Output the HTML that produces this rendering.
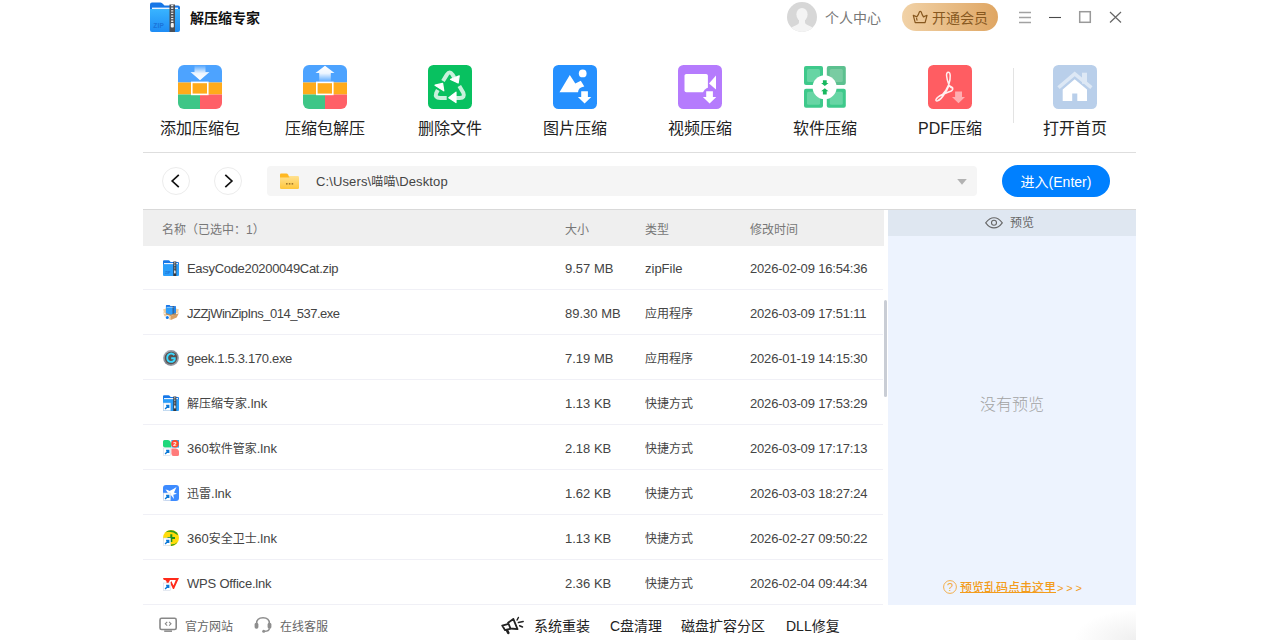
<!DOCTYPE html>
<html lang="zh-CN">
<head>
<meta charset="utf-8">
<title>解压缩专家</title>
<style>
*{box-sizing:border-box;margin:0;padding:0}
html,body{width:1280px;height:640px;overflow:hidden;background:#fff}
body{font-family:"Liberation Sans","Noto Sans CJK SC",sans-serif;color:#222;position:relative}
.abs{position:absolute}
.t{position:absolute;white-space:nowrap;line-height:20px;height:20px}
#win{position:absolute;left:143px;top:0;width:993px;height:640px;background:#fff}
/* title bar */
#title{left:190px;top:8px;font-size:14px;font-weight:700;color:#111}
#uc{left:825px;top:8px;font-size:14px;color:#777}
#vip{left:902px;top:3px;width:96px;height:28px;border-radius:14px;background:linear-gradient(90deg,#f1d2a7,#dfa663)}
#vipt{left:932px;top:8px;font-size:14px;color:#87581f}
/* toolbar */
.tl{position:absolute;top:119px;width:120px;text-align:center;font-size:16px;line-height:20px;color:#222;white-space:nowrap}
.ic{position:absolute;top:65px;width:44px;height:44px}
/* nav */
.circ{position:absolute;top:167px;width:28px;height:28px;border-radius:50%;border:1px solid #ececec;background:#fff}
#path{left:267px;top:166px;width:710px;height:30px;border-radius:4px;background:#f5f5f5}
#patht{left:316px;top:172px;font-size:13px;color:#444;letter-spacing:0.120px}
#go{left:1002px;top:165px;width:108px;height:32px;border-radius:16px;background:#0080ff}
#got{left:1002px;top:172px;width:108px;text-align:center;font-size:14px;color:#fff}
/* table */
#thead{left:143px;top:210px;width:741px;height:36px;background:#efefef}
.th{position:absolute;top:220px;font-size:12px;line-height:20px;color:#777;white-space:nowrap}
.row{position:absolute;left:143px;width:740px;height:45px;border-bottom:1px solid #f0f0f6}
.row span{position:absolute;top:14px;font-size:13px;line-height:20px;color:#444;white-space:nowrap}
.row .n{left:44px}.row .s{left:422px}.row .k{left:502px}.row .d{left:607px;letter-spacing:-0.180px}
.row .k.c{font-size:12px}
.row span i,#patht i{font-style:normal;font-size:12px}
.row svg{position:absolute;left:20px;top:15px;width:16px;height:16px}
/* preview */
#pv{left:888px;top:209px;width:248px;height:396px;background:#edf3fe}
#pvh{left:888px;top:210px;width:248px;height:26px;background:#dfe7f1}
</style>
</head>
<body>
<div id="win"></div>
<!-- title bar -->
<svg class="abs" style="left:150px;top:2px" width="30" height="30" viewBox="0 0 30 30">
 <defs><linearGradient id="lg1" x1="0" y1="0" x2="0" y2="1"><stop offset="0" stop-color="#39b4ff"/><stop offset="1" stop-color="#1e8cf5"/></linearGradient></defs>
 <path d="M0 2.5Q0 0.5 2 0.5H10.5Q12 0.5 13 2L14.5 3.5H28Q30 3.5 30 5.5V12H0Z" fill="#1676e6"/>
 <rect x="2" y="5.6" width="26" height="3" fill="#e9f4ff"/>
 <path d="M0 7H30V28Q30 30 28 30H2Q0 30 0 28Z" fill="url(#lg1)"/>
 <rect x="19.5" y="2.5" width="5.5" height="27.5" fill="#4a4f57"/>
 <path d="M22.2 3V21" stroke="#e8e8e8" stroke-width="2.2" stroke-dasharray="1.3 1.3"/>
 <rect x="20.8" y="21" width="3" height="4.5" rx="1" fill="#f2f2f2"/>
 <text x="3.2" y="26" font-family="Liberation Sans,sans-serif" font-size="6.5" font-weight="700" fill="#1b74d8" letter-spacing="0.3">ZIP</text>
</svg>
<div class="t" id="title">解压缩专家</div>
<svg class="abs" style="left:787px;top:2px" width="30" height="30" viewBox="0 0 30 30">
 <defs><clipPath id="cpa"><circle cx="15" cy="15" r="15"/></clipPath></defs>
 <circle cx="15" cy="15" r="15" fill="#d7d7d7"/>
 <g clip-path="url(#cpa)" fill="#f4f4f4">
  <ellipse cx="15" cy="12.5" rx="5.6" ry="6.6"/>
  <path d="M12 17h6v3.2q0 2 3.5 3.2q5 1.6 6 4.6v4h-25v-4q1-3 6-4.600q3.500-1.200 3.500-3.200z"/>
 </g>
</svg>
<div class="t" id="uc">个人中心</div>
<div class="abs" id="vip"></div>
<svg class="abs" style="left:912px;top:10px" width="16" height="14" viewBox="0 0 16 14" fill="none" stroke="#87581f" stroke-width="1.2" stroke-linejoin="round" stroke-linecap="round">
 <path d="M3.200 12.700L1.300 5.300L4.800 6.900Q6.800 4.300 7.300 2.100Q8.300 0.700 9.300 2.100Q9.800 4.300 11.500 6.900L15 5.300L13.100 12.700Z"/>
 <path d="M4.600 8.400L5 10.200" />
</svg>
<div class="t" id="vipt">开通会员</div>
<svg class="abs" style="left:1015px;top:8px" width="115" height="20" viewBox="1015 8 115 20" fill="none">
 <path d="M1019 12.500H1031M1019 17.500H1031M1019 22.500H1031" stroke="#a2a2a2" stroke-width="1.500"/>
 <path d="M1049 17.500H1061" stroke="#4a4a4a" stroke-width="1.100"/>
 <rect x="1079.700" y="11.700" width="10.600" height="10.600" stroke="#999" stroke-width="1.500"/>
 <path d="M1110 12L1121 22.500M1121 12L1110 22.500" stroke="#666" stroke-width="1.200"/>
</svg>


<!-- toolbar -->
<svg class="ic" style="left:178px" viewBox="0 0 44 44">
 <defs><clipPath id="cp1"><rect width="44" height="44" rx="6"/></clipPath>
 <linearGradient id="ga" x1="0" y1="0" x2="0" y2="1"><stop offset="0" stop-color="#fff" stop-opacity="0"/><stop offset="0.55" stop-color="#fff" stop-opacity="0.900"/><stop offset="1" stop-color="#fff"/></linearGradient></defs>
 <g clip-path="url(#cp1)"><rect width="44" height="17.500" fill="#4da3ff"/><rect y="17.500" width="44" height="12" fill="#ffab1b"/><rect y="29.500" width="22" height="14.500" fill="#3ec687"/><rect x="22" y="29.500" width="22" height="14.500" fill="#ff6067"/></g>
 <path d="M16.500 0H27.500V7H31.500L22 15.200L12.500 7H16.500Z" fill="url(#ga)"/>
 <rect x="13.800" y="17.400" width="16" height="12" fill="none" stroke="#fff" stroke-width="1.600"/>
</svg>
<div class="tl" style="left:140px">添加压缩包</div>
<svg class="ic" style="left:303px" viewBox="0 0 44 44">
 <defs><linearGradient id="gb" x1="0" y1="0" x2="0" y2="1"><stop offset="0" stop-color="#fff"/><stop offset="0.45" stop-color="#fff" stop-opacity="0.900"/><stop offset="1" stop-color="#fff" stop-opacity="0"/></linearGradient></defs>
 <g clip-path="url(#cp1)"><rect width="44" height="17.500" fill="#4da3ff"/><rect y="17.500" width="44" height="12" fill="#ffab1b"/><rect y="29.500" width="22" height="14.500" fill="#3ec687"/><rect x="22" y="29.500" width="22" height="14.500" fill="#ff6067"/></g>
 <path d="M22 0.800L31.500 8H27.800V17.500H16.200V8H12.500Z" fill="url(#gb)"/>
 <rect x="13.800" y="17.400" width="16" height="12" fill="none" stroke="#fff" stroke-width="1.600"/>
</svg>
<div class="tl" style="left:265px">压缩包解压</div>
<svg class="ic" style="left:428px" viewBox="0 0 44 44">
 <rect width="44" height="44" rx="5.500" fill="#08c160"/>
 <g fill="none" stroke="#fff" stroke-opacity="0.780" stroke-width="4" stroke-linejoin="round">
  <path d="M15 16L18.900 9.600Q21.600 5.600 24.500 9.600L26.300 12.600"/>
  <path d="M31.300 21L35.300 27.800Q37.300 33 31.800 33H28"/>
  <path d="M18.700 33H12.200Q6.500 33 8.200 28.200L9.800 25"/>
 </g>
 <g fill="#fff" stroke="#fff" stroke-width="1.200" stroke-linejoin="round">
  <path d="M22.600 14.400L31.200 10.800L30.200 17.900Z"/>
  <path d="M20.800 32.800L28 27.200V37.600Z"/>
  <path d="M7 20.200L14.600 18.400L15.800 25.800Z"/>
 </g>
</svg>
<div class="tl" style="left:390px">删除文件</div>
<svg class="ic" style="left:553px" viewBox="0 0 44 44">
 <rect width="44" height="44" rx="5.500" fill="#2590ff"/>
 <circle cx="29.700" cy="8.400" r="3.900" fill="#fff"/>
 <path d="M6.500 27.300L16.800 10L22.300 18.400L27.800 15.800L31.300 21.500Q25.400 22.300 25 27.300Z" fill="#fff"/>
 <path d="M28.200 26.200H34.900V32H38.300L31.600 38.400L24.900 32H28.200Z" fill="#fff"/>
</svg>
<div class="tl" style="left:515px">图片压缩</div>
<svg class="ic" style="left:678px" viewBox="0 0 44 44">
 <rect width="44" height="44" rx="5.500" fill="#b57bfd"/>
 <rect x="6.500" y="9" width="23.400" height="18.300" rx="1.800" fill="#fff"/>
 <path d="M31 18.600L38 10.600V24.600Z" fill="#fff"/>
 <circle cx="31.600" cy="29.600" r="7" fill="#b57bfd"/>
 <path d="M28.200 26.200H34.900V32H38.300L31.600 38.400L24.900 32H28.200Z" fill="#fff"/>
</svg>
<div class="tl" style="left:640px">视频压缩</div>
<svg class="ic" style="left:803px" viewBox="0 0 44 44">
 <g fill="#3ec98b"><rect x="1" y="1" width="19" height="19" rx="2"/><rect x="1" y="23.700" width="19" height="19" rx="2"/><rect x="23.800" y="23.700" width="19" height="19" rx="2"/></g>
 <rect x="23.800" y="1" width="19" height="19" rx="2" fill="#5cc08f"/>
 <g fill="#67d5a4"><rect x="4" y="4" width="13" height="13" rx="1.500"/><rect x="4" y="26.700" width="13" height="13" rx="1.500"/><rect x="26.800" y="26.700" width="13" height="13" rx="1.500"/></g>
 <rect x="26.800" y="4" width="13" height="13" rx="1.500" fill="#79cca2"/>
 <circle cx="21.600" cy="22.200" r="12" fill="#fff"/>
 <path d="M19.900 15.300H23.700V18H25.500L21.800 21L18.100 18H19.900Z" fill="#18b85f"/>
 <path d="M21.800 23.200L25.500 26.200H23.700V29.400H19.900V26.200H18.100Z" fill="#18b85f"/>
</svg>
<div class="tl" style="left:765px">软件压缩</div>
<svg class="ic" style="left:928px" viewBox="0 0 44 44">
 <rect width="44" height="44" rx="5.500" fill="#ff5d62"/>
 <path d="M20.300 7.300Q18.300 7.300 18.600 11Q19 15 20.800 19.500Q18 26 14.500 29.500Q9 32 8 34.500Q7.500 36.300 9.600 35.800Q13 34.500 16 29.500Q19 25.500 21 20.500Q23.500 23.500 24.500 22.800Q25.500 24.500 22.700 26.300Q20 27.300 17 28.600M20.800 19.500Q22.500 14 22.200 10.500Q22 7.300 20.300 7.300M21 20.500L24.600 22.600" fill="none" stroke="#fff" stroke-opacity="0.900" stroke-width="1.500" stroke-linejoin="round" stroke-linecap="round"/>
 <path d="M27.100 26.400H34V32H37L30.500 38.200L24 32H27.100Z" fill="#fff" fill-opacity="0.500"/>
</svg>
<div class="tl" style="left:890px">PDF压缩</div>
<div class="abs" style="left:1013px;top:68px;width:1px;height:55px;background:#e3e3e3"></div>
<svg class="ic" style="left:1053px" viewBox="0 0 44 44">
 <rect width="44" height="44" rx="5.500" fill="#b9cfea"/>
 <rect x="29" y="7.700" width="5" height="11" fill="#dde8f5"/>
 <path d="M5.500 22.600L21.700 8.800L38.400 22.600" fill="none" stroke="#dde8f5" stroke-width="3.600"/>
 <path d="M9.700 24.500L21.700 14.200L34 24.500V36.100H24.300V28.400H19.200V36.100H9.700Z" fill="#fff"/>
</svg>
<div class="tl" style="left:1015px">打开首页</div>
<div class="abs" style="left:143px;top:152px;width:993px;height:1px;background:#dedede"></div>

<!-- nav -->
<div class="circ" style="left:162px"></div>
<div class="circ" style="left:214px"></div>
<svg class="abs" style="left:162px;top:167px" width="80" height="28" viewBox="0 0 80 28" fill="none" stroke="#111" stroke-width="1.700" stroke-linejoin="miter">
 <path d="M16.800 7.800L10.200 14L16.800 20.200"/><path d="M63.300 7.800L69.900 14L63.300 20.200"/>
</svg>
<div class="abs" id="path"></div>
<svg class="abs" style="left:280px;top:173px" width="19" height="16" viewBox="0 0 19 16"><defs><linearGradient id="gf" x1="0" y1="0" x2="0" y2="1"><stop offset="0" stop-color="#ffe190"/><stop offset="1" stop-color="#ffc63a"/></linearGradient></defs>
 <path d="M0 1.500Q0 0.500 1 0.500H6.500Q7.500 0.500 8 1.500L9 3.500H0Z" fill="#ffb822"/>
 <path d="M0 3H17.800Q19 3 19 4.200V14.800Q19 16 17.800 16H1.200Q0 16 0 14.800Z" fill="url(#gf)"/>
 <path d="M0 3H8.500L9.500 4.500H0Z" fill="#ffb822"/>
 <rect x="6" y="10.200" width="1.600" height="1.300" fill="#8a6420"/><rect x="8.800" y="10.200" width="1.600" height="1.300" fill="#8a6420"/><rect x="11.600" y="10.200" width="1.600" height="1.300" fill="#8a6420"/>
</svg>
<div class="t" id="patht">C:\Users\<i>喵喵</i>\Desktop</div>
<svg class="abs" style="left:956px;top:178px" width="12" height="8" viewBox="0 0 12 8"><path d="M1.200 1H10.800L6 6.800Z" fill="#b2b2b2"/></svg>
<div class="abs" id="go"></div>
<div class="t" id="got">进入(Enter)</div>

<!-- table -->
<div class="abs" id="thead"></div>
<div class="th" style="left:162px">名称（已选中：1）</div><div class="th" style="left:565px">大小</div><div class="th" style="left:645px">类型</div><div class="th" style="left:750px">修改时间</div>
<div class="row" style="top:245px"><svg viewBox="0 0 16 16"><path d="M0 1.200Q0 0.200 1 0.200H5.500Q6.300 0.200 6.800 1L7.600 2H15Q16 2 16 3V6H0Z" fill="#1778e8"/><rect x="1" y="3" width="14" height="1.600" fill="#eaf4ff"/><path d="M0 4.200H16V15Q16 16 15 16H1Q0 16 0 15Z" fill="#2b9ffb"/><rect x="10.300" y="1.500" width="3" height="14.500" fill="#34373d"/><path d="M11.800 2V11" stroke="#e6e6e6" stroke-width="1.200" stroke-dasharray="0.800 0.800"/><rect x="11.100" y="11" width="1.500" height="2.400" fill="#f2f2f2"/><text x="2" y="13.500" font-family="Liberation Sans,sans-serif" font-size="3.500" font-weight="700" fill="#1b74d8">ZIP</text></svg><span class="n" style="letter-spacing:-0.310px">EasyCode20200049Cat.zip</span><span class="s">9.57 MB</span><span class="k">zipFile</span><span class="d">2026-02-09 16:54:36</span></div>
<div class="row" style="top:290px"><svg viewBox="0 0 16 16"><path d="M0 4.600L3 3.400V8.500L0.800 7.600L0 8.300L0.800 6.200Z" fill="#f0cd9c"/><path d="M16 4.600L13 3.400V8.500L15.200 7.600L16 8.300L15.200 6.200Z" fill="#f0cd9c"/><path d="M2.900 0.700Q2.900 0 3.600 0H6.600L7.400 1H12.800V9.500H2.900Z" fill="#1876e6"/><rect x="3.600" y="1.900" width="8.600" height="1" fill="#e6f2ff"/><rect x="3" y="2.500" width="6.800" height="7.500" fill="#2e9ffb"/><rect x="9.700" y="1" width="1" height="9" fill="#4b5058"/><rect x="10.700" y="2" width="2.100" height="8" fill="#1c84ea"/><path d="M0.200 8.200L7.800 11L7.800 15L2.300 12.600Z" fill="#edc38e"/><path d="M15.800 8.200L7.800 11L7.800 15L13.700 12.600Z" fill="#d8a063"/><path d="M2.900 9.200L7.800 11L12.800 9.200L12.800 8L7.800 9.800L2.900 8Z" fill="#c58d50"/><circle cx="4.300" cy="12.600" r="2.300" fill="#fff"/><circle cx="4.300" cy="12.600" r="1.500" fill="#0f7bf0"/></svg><span class="n" style="letter-spacing:-0.520px">JZZjWinZipIns_014_537.exe</span><span class="s">89.30 MB</span><span class="k c">应用程序</span><span class="d">2026-03-09 17:51:11</span></div>
<div class="row" style="top:335px"><svg viewBox="0 0 16 16"><defs><linearGradient id="gg" x1="0" y1="0" x2="1" y2="1"><stop offset="0" stop-color="#b9bec8"/><stop offset="0.5" stop-color="#7d828c"/><stop offset="1" stop-color="#a9aeb8"/></linearGradient></defs><circle cx="8" cy="8" r="7.900" fill="url(#gg)"/><circle cx="8" cy="8" r="6.200" fill="#5b4f4c"/><path d="M11.400 5.100Q9.700 3.300 7.500 3.600Q4.200 4.300 4.200 8Q4.400 11.800 8 11.900Q10.800 11.800 11.700 9.600V8.300H8.200" fill="none" stroke="#3bd8ff" stroke-width="1.900"/></svg><span class="n" style="letter-spacing:-0.310px">geek.1.5.3.170.exe</span><span class="s">7.19 MB</span><span class="k c">应用程序</span><span class="d">2026-01-19 14:15:30</span></div>
<div class="row" style="top:380px"><svg viewBox="0 0 16 16"><path d="M0 1.200Q0 0.200 1 0.200H5.500Q6.300 0.200 6.800 1L7.600 2H15Q16 2 16 3V6H0Z" fill="#1778e8"/><rect x="1" y="3" width="14" height="1.600" fill="#eaf4ff"/><path d="M0 4.200H16V15Q16 16 15 16H1Q0 16 0 15Z" fill="#2b9ffb"/><rect x="10.300" y="1.500" width="3" height="14.500" fill="#34373d"/><path d="M11.800 2V11" stroke="#e6e6e6" stroke-width="1.200" stroke-dasharray="0.800 0.800"/><rect x="11.100" y="11" width="1.500" height="2.400" fill="#f2f2f2"/><g><rect x="0.300" y="8" width="7.200" height="7.700" fill="#fff" stroke="#c9d3e3" stroke-width="0.500"/><path d="M2.100 13.900L5.300 10.700M3.100 10.500H5.700V13.100" fill="none" stroke="#0b78d6" stroke-width="1.400"/></g></svg><span class="n"><i>解压缩专家</i>.lnk</span><span class="s">1.13 KB</span><span class="k c">快捷方式</span><span class="d">2026-03-09 17:53:29</span></div>
<div class="row" style="top:425px"><svg viewBox="0 0 16 16"><path d="M0 1.500Q0 0 1.500 0H5Q8 0.500 8 4V7.600H2Q0 7.600 0 5.500Z" fill="#1fd87c"/><rect x="8.400" y="0" width="7.600" height="7.600" fill="#2cb5fb"/><path d="M8.400 8.400H13Q16 9 16 12V14.500Q16 16 14.500 16H10.500Q8.400 16 8.400 13.500Z" fill="#ff7b7b"/><circle cx="12" cy="3.800" r="3.800" fill="#ff4b2b"/><text x="10.300" y="6" font-family="Liberation Sans,sans-serif" font-size="6" font-weight="700" fill="#fff">2</text><g><rect x="0.300" y="8" width="7.200" height="7.700" fill="#fff" stroke="#c9d3e3" stroke-width="0.500"/><path d="M2.100 13.900L5.300 10.700M3.100 10.500H5.700V13.100" fill="none" stroke="#0b78d6" stroke-width="1.400"/></g></svg><span class="n">360<i>软件管家</i>.lnk</span><span class="s">2.18 KB</span><span class="k c">快捷方式</span><span class="d">2026-03-09 17:17:13</span></div>
<div class="row" style="top:470px"><svg viewBox="0 0 16 16"><rect width="16" height="16" rx="3" fill="#3d8bff"/><path d="M2.500 4.500Q5 4.500 6.500 6Q10 4.500 13.500 2Q12 5.500 11 7.500L14 8.800L10.300 9.800L11 14L8.300 10.500Q6 10 4.500 7.500Q3.800 6 2.500 4.500Z" fill="#fff"/><g><rect x="0.300" y="8" width="7.200" height="7.700" fill="#fff" stroke="#c9d3e3" stroke-width="0.500"/><path d="M2.100 13.900L5.300 10.700M3.100 10.500H5.700V13.100" fill="none" stroke="#0b78d6" stroke-width="1.400"/></g></svg><span class="n"><i>迅雷</i>.lnk</span><span class="s">1.62 KB</span><span class="k c">快捷方式</span><span class="d">2026-03-03 18:27:24</span></div>
<div class="row" style="top:515px"><svg viewBox="0 0 16 16"><circle cx="8" cy="8" r="8" fill="#ffdc0a"/><path d="M2.500 2.200Q8 -2 13.800 2.500Q15 4 14.800 5.200Q9 0.500 2.500 2.200Z" fill="#2f9a1f"/><path d="M8 15.900Q12 15.500 14.500 12Q12 14.500 8 14.600Z" fill="#2f9a1f"/><path d="M8.300 4.300V12M4.500 8H12" stroke="#1f8f1f" stroke-width="2"/><g><rect x="0.300" y="8" width="7.200" height="7.700" fill="#fff" stroke="#c9d3e3" stroke-width="0.500"/><path d="M2.100 13.900L5.300 10.700M3.100 10.500H5.700V13.100" fill="none" stroke="#0b78d6" stroke-width="1.400"/></g></svg><span class="n">360<i>安全卫士</i>.lnk</span><span class="s">1.13 KB</span><span class="k c">快捷方式</span><span class="d">2026-02-27 09:50:22</span></div>
<div class="row" style="top:560px"><svg viewBox="0 0 16 16"><path d="M0 3H16L11 14H10L7.200 8.200L8.300 6L10.500 10.500L12.800 5H7L4.500 10H2.300L3.800 7L2.300 5H0.800Z" fill="#ff2a1a"/><g><rect x="0.300" y="8" width="7.200" height="7.700" fill="#fff" stroke="#c9d3e3" stroke-width="0.500"/><path d="M2.100 13.900L5.300 10.700M3.100 10.500H5.700V13.100" fill="none" stroke="#0b78d6" stroke-width="1.400"/></g></svg><span class="n" style="letter-spacing:-0.200px">WPS Office.lnk</span><span class="s">2.36 KB</span><span class="k c">快捷方式</span><span class="d">2026-02-04 09:44:34</span></div>
<div class="abs" style="left:884px;top:300px;width:3px;height:97px;background:#c9cdd5;border-radius:1.500px"></div>

<!-- preview -->
<div class="abs" id="pv"></div>
<div class="abs" id="pvh"></div>
<div class="abs" style="left:143px;top:209px;width:993px;height:1px;background:#d9d9d9"></div>
<svg class="abs" style="left:985px;top:216px" width="18" height="13" viewBox="0 0 18 13" fill="none" stroke="#666" stroke-width="1.100"><path d="M0.700 6.800Q4.500 1.800 9 1.800Q13.500 1.800 17.300 6.800Q13.500 11.900 9 11.900Q4.500 11.900 0.700 6.800Z"/><circle cx="9" cy="6.800" r="2.500"/></svg>
<div class="t" style="left:1010px;top:213px;font-size:12px;color:#666">预览</div>
<div class="t" style="left:980px;top:395px;font-size:16px;color:#a3a3a3;font-weight:300">没有预览</div>
<svg class="abs" style="left:943px;top:580px" width="14" height="14" viewBox="0 0 14 14"><circle cx="7" cy="7" r="6.400" fill="none" stroke="#f3a73a" stroke-width="0.900"/></svg>
<div class="t" style="left:943px;top:577px;width:14px;text-align:center;font-size:11px;color:#f3a73a">?</div>
<div class="t" style="left:960px;top:578px;font-size:12px;color:#f39c1c;font-weight:500"><span style="text-decoration:underline;text-underline-offset:0px;text-decoration-skip-ink:none;text-decoration-thickness:1px">预览乱码点击这里</span><span style="letter-spacing:2.800px;font-size:11px;font-weight:400;margin-left:1px">&gt;&gt;&gt;</span></div>

<!-- footer -->
<svg class="abs" style="left:159px;top:617px" width="18" height="15" viewBox="0 0 18 15" fill="none" stroke="#888" stroke-width="1.600"><rect x="1" y="1.300" width="16.200" height="11.200" rx="1.600"/><rect x="5.200" y="13.400" width="7.800" height="1.500" fill="#888" stroke="none"/><path d="M8.200 4.900L6.300 6.800L8.200 8.700M10.100 4.900L12 6.800L10.100 8.700" stroke-width="1.100"/></svg>
<div class="t" style="left:185px;top:617px;font-size:12px;color:#666">官方网站</div>
<svg class="abs" style="left:254px;top:616px" width="18" height="17" viewBox="0 0 18 17" fill="none" stroke="#8e8e8e" stroke-width="1.500"><path d="M2.600 8V7.500Q2.600 1.700 9 1.700Q15.400 1.700 15.400 7.500V8"/><rect x="0.600" y="6.800" width="3.800" height="6" rx="1.700" fill="#8e8e8e" stroke="none"/><rect x="13.600" y="6.800" width="3.800" height="6" rx="1.700" fill="#8e8e8e" stroke="none"/><path d="M15.500 12.300Q15 15.200 10.500 15.300"/><circle cx="9.700" cy="15.300" r="1.500" fill="#8e8e8e" stroke="none"/></svg>
<div class="t" style="left:280px;top:617px;font-size:12px;color:#666">在线客服</div>
<svg class="abs" style="left:501px;top:616px" width="24" height="19" viewBox="0 0 24 19" fill="none" stroke="#222" stroke-width="1.800" stroke-linejoin="round" stroke-linecap="round"><path d="M7.100 6.700L12.300 2.900L16.500 13.200L9.500 12.500Z"/><path d="M6.700 8.100L1.200 9.600L4.100 14.200L9 12.800"/><path d="M5.900 14.200L7.300 16.800" stroke-width="2.600"/><path d="M16.100 4L17.400 1.500M17.400 6.600L22.200 5.400M18.600 9.800L21.500 11" stroke-width="1.500"/></svg>
<div class="t" style="left:534px;top:616px;font-size:14px;color:#222">系统重装</div>
<div class="t" style="left:610px;top:616px;font-size:14px;color:#222">C盘清理</div>
<div class="t" style="left:681px;top:616px;font-size:14px;color:#222">磁盘扩容分区</div>
<div class="t" style="left:786px;top:616px;font-size:14px;color:#222">DLL修复</div>
<div class="abs" style="left:1036px;top:600px;width:100px;height:40px;background:radial-gradient(ellipse 62px 30px at 100% 100%,rgba(110,110,110,0.110),rgba(110,110,110,0) 100%);"></div>
</body>
</html>
